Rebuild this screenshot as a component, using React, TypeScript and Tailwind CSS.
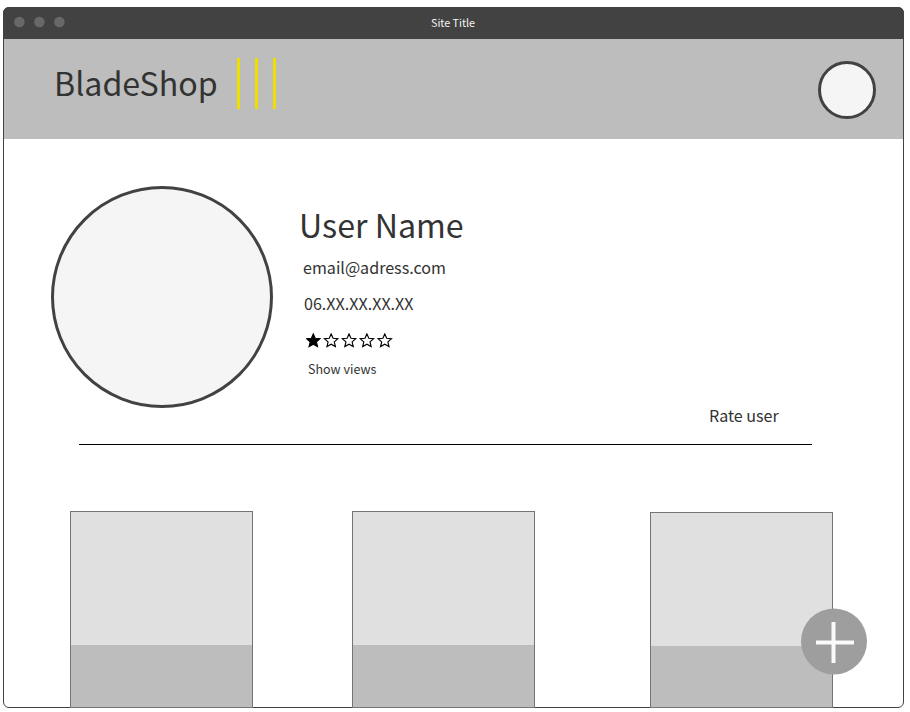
const STAR = "M7.5 0.9 L9.4 5.3 L14.2 5.7 L10.6 8.9 L11.7 13.6 L7.5 11.2 L3.3 13.6 L4.4 8.9 L0.8 5.7 L5.6 5.3 Z";
const STAR_PITCH = 17.87;

function Rating({ value }: { value: number }) {
  return (
    <svg viewBox="0 0 88 15" className="h-[15px] w-[88px]" stroke="#000" strokeWidth="1.15">
      {[0, 1, 2, 3, 4].map((i) => (
        <path key={i} d={STAR} fill={i < value ? "#000" : "none"} transform={`translate(${i * STAR_PITCH - 0.2} 0)`} />
      ))}
    </svg>
  );
}

function Card({ className }: { className: string }) {
  return (
    <article className={`flex w-[183px] shrink-0 flex-col border border-[#757575] bg-[#e0e0e0] ${className}`}>
      <div className="h-[133px]" />
      <div className="flex-1 bg-[#bdbdbd]" />
    </article>
  );
}

function TitleBar() {
  return (
    <div className="-mx-px -mt-px grid h-8 shrink-0 grid-cols-[1fr_auto_1fr] rounded-t-[6px] bg-[#424242]">
      <svg viewBox="0 0 54 12" className="mt-[9px] ml-[10px] h-3 w-[54px]" fill="#686868">
        <circle cx="6.4" cy="6" r="5.3" />
        <circle cx="26.4" cy="6" r="5.3" />
        <circle cx="46.4" cy="6" r="5.3" />
      </svg>
      <div className="mt-2 mr-px text-[10.74px] leading-4 text-[#f5f5f5]">Site Title</div>
    </div>
  );
}

function Header() {
  return (
    <header className="flex h-[100px] shrink-0 items-start bg-[#bdbdbd] pl-[50px]">
      <h1 className="mt-[23px] w-[183px] text-[32.2px] leading-10 whitespace-nowrap">BladeShop</h1>
      <div className="mt-[19px] flex gap-[15px]">
        <span className="h-[51px] w-[3px] bg-[#f0de00]" />
        <span className="h-[51px] w-[3px] bg-[#f0de00]" />
        <span className="h-[51px] w-[3px] bg-[#f0de00]" />
      </div>
      <div className="mt-[22px] mr-[27px] ml-auto size-[58px] rounded-full border-[3px] border-[#424242] bg-[#f5f5f5]" />
    </header>
  );
}

export default function App() {
  return (
    <div className="h-[712px] w-[910px] bg-white pt-[7px] pl-[3px] font-['Noto_Sans_CJK_SC',sans-serif] text-[#333333]">
      <div className="relative flex h-[701px] w-[901px] flex-col rounded-[6px] border border-[#424242]">
        <TitleBar />
        <Header />
        <section className="flex h-[305px] shrink-0 items-start pt-[47px] pl-[47px]">
          <div className="size-[222px] shrink-0 rounded-full border-[3px] border-[#424242] bg-[#f5f5f5]" />
          <div className="mt-[18px] ml-[26px] w-[200px]">
            <h2 className="text-[32.2px] leading-10 whitespace-nowrap">User Name</h2>
            <p className="mt-[11px] ml-1 text-[16.1px] leading-6">email@adress.com</p>
            <p className="mt-3 ml-[5px] text-[16.1px] leading-6">06.XX.XX.XX.XX</p>
            <div className="mt-[18px] ml-[7px] flex">
              <Rating value={1} />
            </div>
            <p className="mt-[11px] ml-[9px] text-[12.53px] leading-5">Show views</p>
          </div>
          <button className="mt-[217px] ml-[210px] text-[16.1px] leading-6 whitespace-nowrap">Rate user</button>
        </section>
        <hr className="mr-[91px] ml-[75px] h-px shrink-0 border-0 bg-black" />
        <section className="-mb-px flex flex-1 pt-[66px] pl-[66px]">
          <Card className="" />
          <Card className="ml-[99px]" />
          <Card className="mt-px ml-[115px]" />
        </section>
        <button aria-label="Add" className="absolute top-[600px] left-[797px] size-[67px]">
          <svg viewBox="0 0 67 67" className="size-full">
            <circle cx="33" cy="33.4" r="33" fill="#9e9e9e" />
            <path d="M32.5 14V55M15 34.5H53" stroke="#fafafa" strokeWidth="4" />
          </svg>
        </button>
      </div>
    </div>
  );
}
